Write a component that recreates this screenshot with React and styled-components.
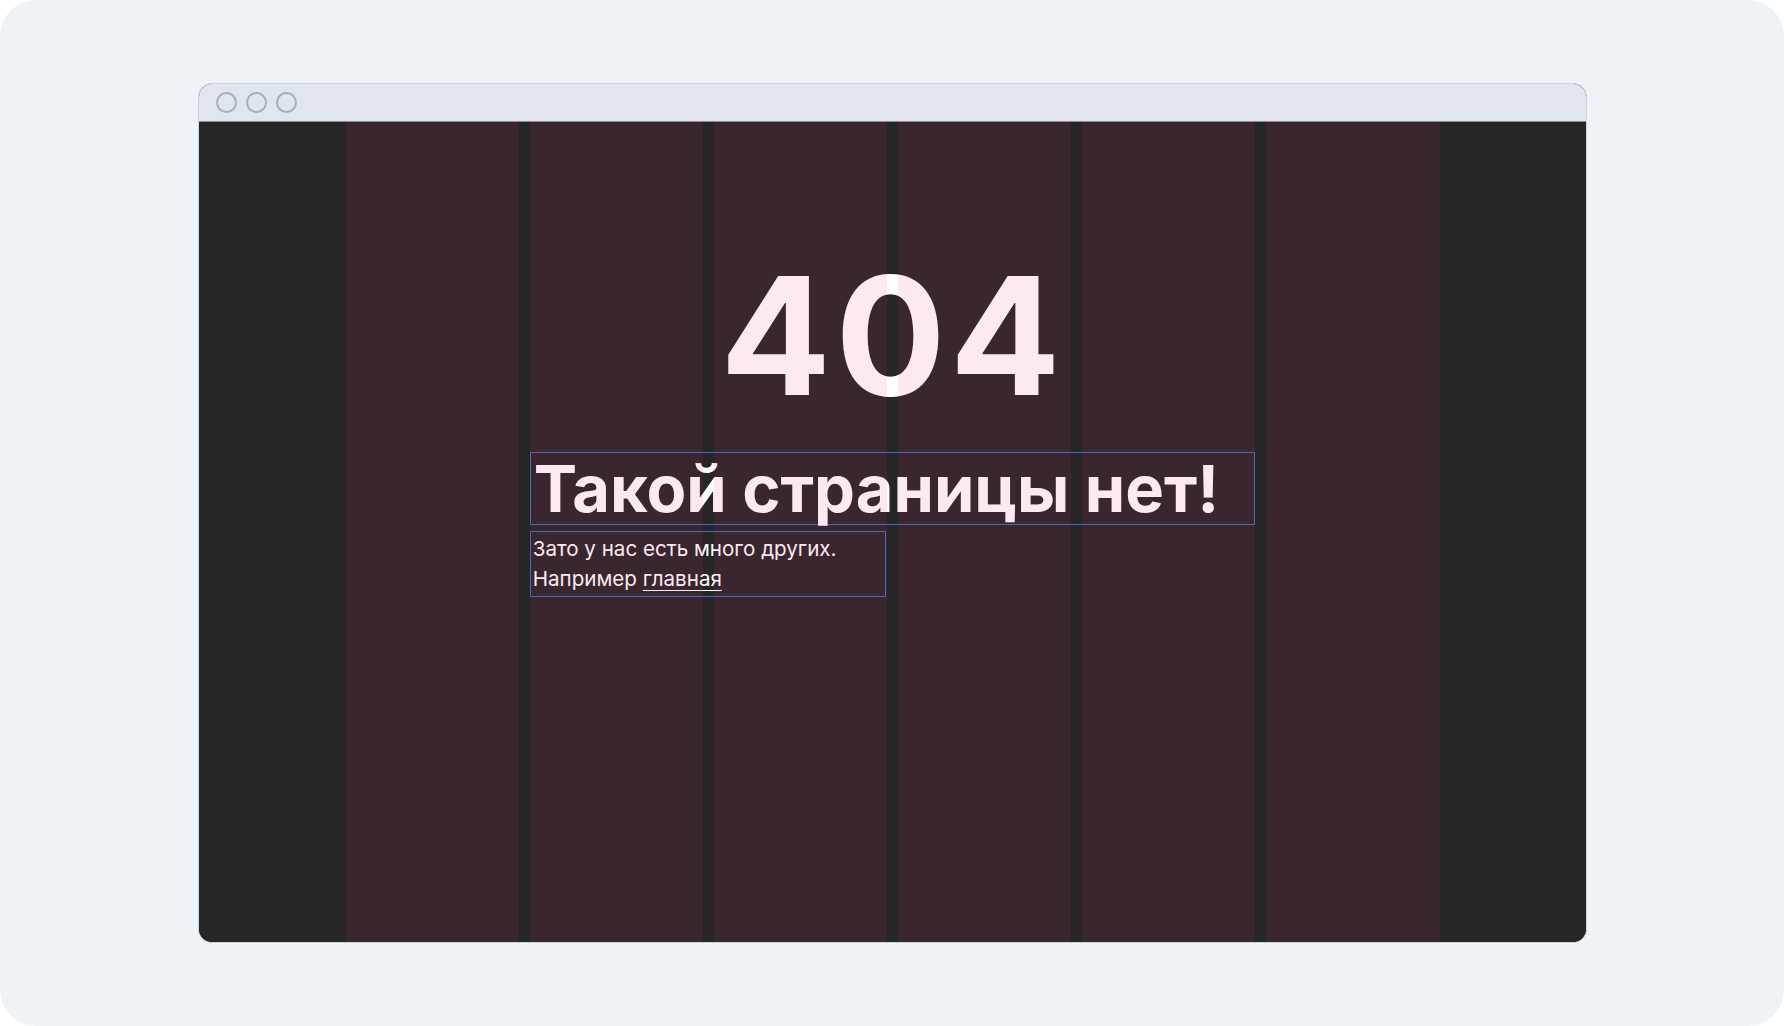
import React from 'react';
import styled, { createGlobalStyle } from 'styled-components';

const GlobalStyle = createGlobalStyle`
  html, body {
    margin: 0;
    padding: 0;
    background: #ffffff;
  }
  * {
    box-sizing: border-box;
  }
`;

const COLUMNS = 6;

const Page = styled.div`
  width: 100vw;
  height: 100vh;
  background: #eef3f7;
  border-radius: 36px;
  display: flex;
  justify-content: center;
  align-items: center;
  font-family: Inter, "Noto Sans", sans-serif;
`;

const BrowserFrame = styled.div`
  width: 1389px;
  height: 860px;
  border: 1px solid #cfd4e3;
  border-radius: 14px;
  overflow: hidden;
  display: flex;
  flex-direction: column;
  background: #262626;
`;

const Toolbar = styled.div`
  height: 38px;
  flex-shrink: 0;
  background: #e1e5ee;
  display: flex;
  align-items: center;
  gap: 9px;
  padding-left: 17px;
  border-bottom: 1px solid #8f8a93;
`;

const Dot = styled.span`
  width: 21px;
  height: 21px;
  border-radius: 50%;
  border: 2px solid #a6adc7;
`;

const Viewport = styled.div`
  flex: 1;
  position: relative;
  background: #262626;
`;

const Grid = styled.div`
  display: grid;
  grid-template-columns: repeat(${COLUMNS}, 1fr);
  column-gap: 11px;
  padding: 0 146px 0 147px;
  height: 100%;
`;

const Overlay = styled(Grid)`
  position: absolute;
  inset: 0;
  pointer-events: none;
`;

const GridColumn = styled.div`
  background: rgba(236, 38, 113, 0.1);
`;

const Content = styled.div`
  grid-column: 2 / span 4;
  padding-top: 132px;
  display: flex;
  flex-direction: column;
`;

const Code = styled.div`
  font-size: 164px;
  font-weight: 700;
  line-height: 1;
  letter-spacing: 4px;
  color: #ffffff;
  text-align: center;
  margin-bottom: 34px;
`;

const Highlight = styled.div`
  border: 1.5px solid #3f6cc0;
`;

const Title = styled.h1`
  margin: 0;
  padding: 0 3px;
  font-size: 65px;
  font-weight: 700;
  line-height: 71px;
  color: #ffffff;
`;

const TextBox = styled(Highlight)`
  width: calc(50% - 6px);
  margin-top: 6px;
  padding: 2px 2px;
`;

const Text = styled.p`
  margin: 0;
  font-size: 20.6px;
  line-height: 30px;
  color: #ffffff;
`;

const HomeLink = styled.a`
  color: inherit;
  text-decoration: underline;
  text-decoration-thickness: 1px;
  text-underline-offset: 4px;
`;

const App = () => (
  <>
    <GlobalStyle />
    <Page>
      <BrowserFrame>
        <Toolbar>
          <Dot />
          <Dot />
          <Dot />
        </Toolbar>
        <Viewport>
          <Grid>
            <Content>
              <Code>404</Code>
              <Highlight>
                <Title>Такой страницы нет!</Title>
              </Highlight>
              <TextBox>
                <Text>Зато у нас есть много других.</Text>
                <Text>
                  Например <HomeLink href="#">главная</HomeLink>
                </Text>
              </TextBox>
            </Content>
          </Grid>
          <Overlay>
            {Array.from({ length: COLUMNS }).map((_, i) => (
              <GridColumn key={i} />
            ))}
          </Overlay>
        </Viewport>
      </BrowserFrame>
    </Page>
  </>
);

export default App;
